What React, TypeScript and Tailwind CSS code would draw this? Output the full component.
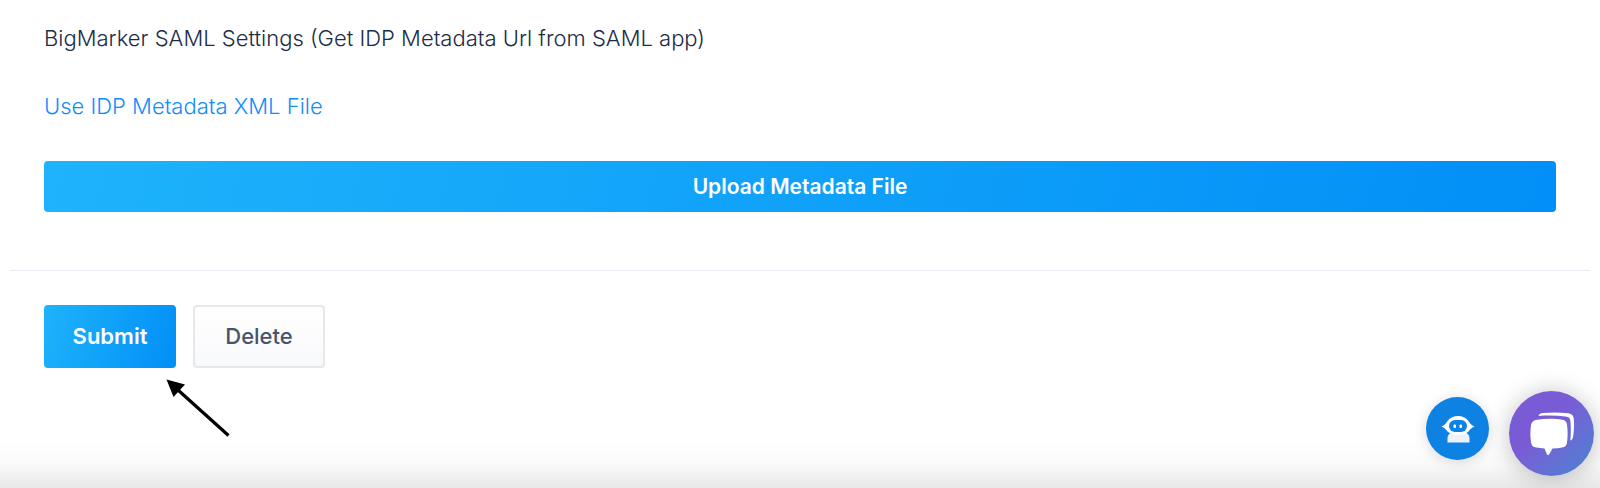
const RobotIcon = () => {
  return (
    <svg viewBox="0 0 34 28" className="h-7 w-[34px]" aria-hidden="true">
      <path
        d="M6.5 27.5 V23 C6.5 20.5 8 18.5 10.5 17.5 H24.5 C27 18.5 28.5 20.5 28.5 23 V27.5 Z"
        fill="#eef2fe"
      />
      <path
        d="M0.5 11.5 C3.5 10.5 5 8.5 6.5 6 C9 2.5 13 1 17 1 C21 1 25 2.5 27.5 6 C29 8.5 30.5 10.5 33.5 11.5 C30.5 12.5 29 14.5 27.5 16.5 C25 19 21 20 17 20 C13 20 9 19 6.5 16.5 C5 14.5 3.5 12.5 0.5 11.5 Z"
        fill="#fff"
      />
      <rect x="8" y="5" width="18" height="12" rx="6" fill="#0e82e2" />
      <rect x="12.5" y="9.5" width="2.5" height="3.5" rx="1" fill="#fff" />
      <rect x="18.5" y="9.5" width="2.5" height="3.5" rx="1" fill="#fff" />
    </svg>
  );
};

const ChatIcon = () => {
  return (
    <svg viewBox="0 0 46 44" className="h-11 w-[46px]" fill="#fff" aria-hidden="true">
      <path d="M9.5 4 C10 2 11.5 1.2 14 1 C22 0.2 31 0.2 39 1.2 C43 1.7 44.5 3.5 44.8 7 C45.2 12.5 45 18 44.3 23.5 C44 26.5 43 28 41.3 28.6 C41.9 22.5 42 16 41.5 9.5 C41.2 6 39.7 4.7 36.5 4.4 C28 3.5 18.5 3.4 9.5 4 Z" />
      <path d="M8 7.7 C16 6.5 25.5 6.5 33 7.7 C36.5 8.2 37.8 10 38.1 13 C38.8 19 38.8 25 38.1 30 C37.7 33.5 36.3 35 33 35.5 C30 36 26.5 36.4 23.5 36.5 L20.3 42.3 C19.5 43.4 18.5 43.4 17.9 42.3 L15.5 36.5 C12.5 36.4 10 36 7.5 35.6 C4 35 2.5 33.5 2 30 C1.2 25 1.2 19 2 13 C2.4 10 4.5 8.2 8 7.7 Z" />
    </svg>
  );
};

const SubmitArrow = () => {
  return (
    <svg
      viewBox="0 0 64 60"
      className="pointer-events-none absolute top-[73px] left-[122px] h-[60px] w-16"
      aria-hidden="true"
    >
      <path d="M12 12 L62.5 57.5" stroke="#000" strokeWidth="3.2" />
      <path d="M0.5 1.5 L19 6.5 L7.5 19 Z" fill="#000" />
    </svg>
  );
};

const App = () => {
  return (
    <div className="relative min-h-screen bg-white font-['Inter','Open_Sans',sans-serif] text-[22px]">
      <form onSubmit={(e) => e.preventDefault()}>
        {/* SAML settings */}
        <section className="px-11 pt-[22px] pb-[58px]">
          <h2 className="leading-8 font-light text-[#1c2c47]">
            BigMarker SAML Settings (Get IDP Metadata Url from SAML app)
          </h2>
          <a href="#" className="mt-9 block w-fit leading-8 font-light text-[#128dfa]">
            Use IDP Metadata XML File
          </a>
          <button
            type="button"
            className="mt-[39px] h-[51px] w-full rounded-sm bg-linear-[105deg] from-[#1eb3fb] to-[#028ff7] text-[21px] font-semibold text-white"
          >
            Upload Metadata File
          </button>
        </section>

        <hr className="mx-2.5 border-[#e6ecf1]" />

        {/* Actions */}
        <div className="flex gap-[17px] px-11 pt-[34px] pb-16">
          <div className="relative">
            <button
              type="submit"
              className="h-[63px] w-[132px] rounded-sm bg-linear-[105deg] from-[#1eb3fb] to-[#028ff7] font-semibold text-white"
            >
              Submit
            </button>
            <SubmitArrow />
          </div>
          <button
            type="button"
            className="h-[63px] w-[132px] rounded-sm border-2 border-[#e6e8eb] bg-linear-to-b from-white to-[#f8f9fb] font-medium text-[#48546b]"
          >
            Delete
          </button>
        </div>
      </form>

      <div className="pointer-events-none fixed inset-x-0 bottom-0 h-12 bg-linear-to-b from-transparent via-black/2 to-black/9" />

      {/* Chat launchers */}
      <div className="fixed right-1.5 bottom-3 flex items-center gap-5">
        <button
          type="button"
          aria-label="Open assistant"
          className="mb-2.5 flex size-[63px] items-center justify-center rounded-full bg-[#0e82e2] shadow-[0_2px_14px_rgba(0,0,0,0.15)]"
        >
          <RobotIcon />
        </button>
        <button
          type="button"
          aria-label="Open chat"
          className="flex size-[85px] items-center justify-center rounded-full bg-linear-135 from-[#7a5bd6] from-40% to-[#4083d2] shadow-[0_2px_24px_rgba(0,0,0,0.25)]"
        >
          <ChatIcon />
        </button>
      </div>
    </div>
  );
};

export default App;
